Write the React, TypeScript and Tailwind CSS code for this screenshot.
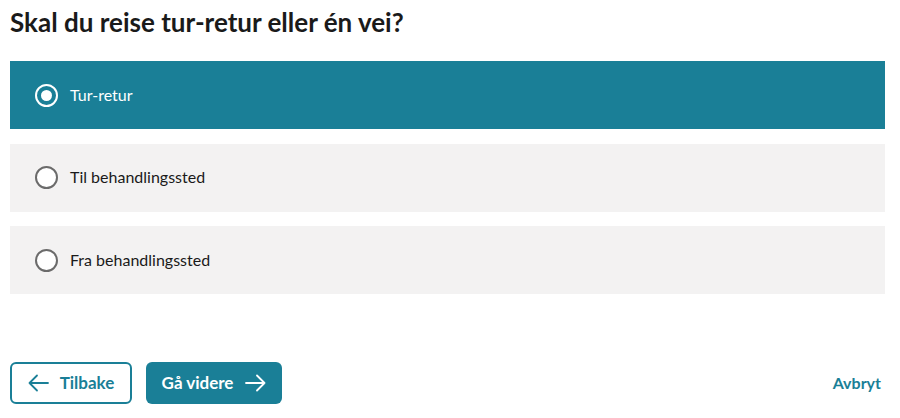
import React, { useState } from 'react';

const OPTIONS = ['Tur-retur', 'Til behandlingssted', 'Fra behandlingssted'];

const ArrowLeftIcon = () => (
  <svg width="21" height="18" viewBox="0 0 21 18" fill="none" stroke="currentColor" strokeWidth="1.8" strokeLinecap="round" strokeLinejoin="round">
    <path d="M20 9H1.5M9 1.5L1.5 9L9 16.5" />
  </svg>
);

const ArrowRightIcon = () => (
  <svg width="21" height="18" viewBox="0 0 21 18" fill="none" stroke="currentColor" strokeWidth="1.8" strokeLinecap="round" strokeLinejoin="round">
    <path d="M1 9h18.5M12 1.5L19.5 9L12 16.5" />
  </svg>
);

export default function App() {
  const [selected, setSelected] = useState(0);

  return (
    <div className="w-[900px] h-[418px] bg-white px-[10px] pt-[6px] text-[#1a1a1a]" style={{ fontFamily: 'Lato, "Open Sans", sans-serif' }}>
      <h1 className="text-[26px] leading-[32px] font-bold">Skal du reise tur-retur eller én vei?</h1>

      {/* Radio options */}
      <div className="mt-[23px] w-[875px] flex flex-col gap-[14.5px]">
        {OPTIONS.map((label, i) => {
          const active = i === selected;
          return (
            <label
              key={label}
              onClick={() => setSelected(i)}
              className={`h-[68px] flex items-center pl-[25px] cursor-pointer ${active ? 'bg-[#1a7f97] text-white' : 'bg-[#f3f2f2] text-[#1a1a1a]'}`}
            >
              <span className={`w-[23px] h-[23px] rounded-full border-2 flex items-center justify-center ${active ? 'border-white' : 'border-[#6b6b6b] bg-white'}`}>
                {active && <span className="w-[11px] h-[11px] rounded-full bg-white" />}
              </span>
              <span className="ml-[12px] text-[16px] leading-[20px] -mt-[1px]">{label}</span>
            </label>
          );
        })}
      </div>

      {/* Navigation */}
      <div className="mt-[68px] w-[875px] flex items-center justify-between">
        <div className="flex gap-[14px]">
          <button className="h-[42px] w-[122px] rounded-[6px] border-2 border-[#1a7f97] text-[#1a7f97] flex items-center justify-center gap-[11px] text-[17px] font-bold">
            <ArrowLeftIcon />
            Tilbake
          </button>
          <button className="h-[42px] w-[136px] rounded-[6px] bg-[#1a7f97] text-white flex items-center justify-center gap-[12px] text-[17px] font-bold">
            Gå videre
            <ArrowRightIcon />
          </button>
        </div>
        <button className="text-[#1a7f97] text-[16px] font-bold pr-[4px]">Avbryt</button>
      </div>
    </div>
  );
}
